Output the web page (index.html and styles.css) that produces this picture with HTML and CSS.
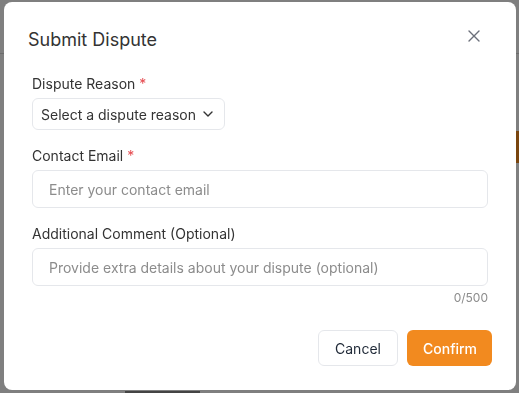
FILE: index.html
```html
<!DOCTYPE html>
<html lang="en">
<head>
    <meta charset="UTF-8">
    <meta name="viewport" content="width=device-width, initial-scale=1.0">
    <title>Submit Dispute</title>
    <link rel="stylesheet" href="styles.css">
</head>
<body>
    <div class="page">
        <div class="page-header"></div>
        <div class="page-row">
            <div class="page-btn"></div>
        </div>
        <div class="page-footer"></div>
    </div>

    <div class="overlay">
        <div class="modal">
            <div class="modal-header">
                <h2 class="modal-title">Submit Dispute</h2>
                <button class="close-btn" aria-label="Close">
                    <svg width="12" height="12" viewBox="0 0 12 12" fill="none">
                        <path d="M1 1L11 11M11 1L1 11" stroke="#6b6f7a" stroke-width="1.4" stroke-linecap="round"/>
                    </svg>
                </button>
            </div>
            <div class="modal-body">
                <div class="field">
                    <label class="field-label">Dispute Reason <span class="required">*</span></label>
                    <button class="select">
                        Select a dispute reason
                        <svg width="10" height="6" viewBox="0 0 10 6" fill="none">
                            <path d="M1 1L5 5L9 1" stroke="#333" stroke-width="1.4" stroke-linecap="round" stroke-linejoin="round"/>
                        </svg>
                    </button>
                </div>
                <div class="field">
                    <label class="field-label">Contact Email <span class="required">*</span></label>
                    <input class="text-input" type="email" placeholder="Enter your contact email">
                </div>
                <div class="field">
                    <label class="field-label">Additional Comment (Optional)</label>
                    <input class="text-input" type="text" placeholder="Provide extra details about your dispute (optional)">
                    <div class="counter">0/500</div>
                </div>
            </div>
            <div class="modal-footer">
                <button class="btn btn-cancel">Cancel</button>
                <button class="btn btn-confirm">Confirm</button>
            </div>
        </div>
    </div>
</body>
</html>
```

FILE: styles.css
```css
body{
    margin: 0;
    font-family: "Inter", "Noto Sans", sans-serif;
    background-color: #fff;
    overflow: hidden;
}
.page{
    height: 393px;
    display: flex;
    flex-direction: column;
}
.page-header{
    height: 53px;
    border-bottom: 1px solid #d8d8d8;
}
.page-row{
    display: flex;
    justify-content: flex-end;
    padding-top: 77px;
}
.page-btn{
    width: 60px;
    height: 32px;
    background-color: #f28a1f;
    margin-right: -41px;
}
.page-footer{
    margin-top: auto;
    margin-left: 125px;
    width: 75px;
    height: 2px;
    background-color: #888;
}
.overlay{
    position: fixed;
    inset: 0;
    background-color: rgba(0, 0, 0, 0.5);
    padding: 2px 0 0 4px;
}
.modal{
    width: 512px;
    height: 388px;
    background-color: #fff;
    border-radius: 8px;
    box-sizing: border-box;
    display: flex;
    flex-direction: column;
}
.modal-header{
    display: flex;
    justify-content: space-between;
    align-items: flex-start;
    padding: 26px 36px 0 24px;
}
.modal-title{
    margin: 0;
    font-size: 18px;
    font-weight: 400;
    color: #333;
    line-height: 24px;
}
.close-btn{
    border: none;
    background: none;
    padding: 0;
    margin-top: 2px;
    width: 12px;
    height: 12px;
    display: flex;
}
.modal-body{
    padding: 22px 28px 0 28px;
    display: flex;
    flex-direction: column;
    gap: 16px;
}
.field{
    display: flex;
    flex-direction: column;
    align-items: flex-start;
}
.field-label{
    font-size: 14px;
    color: #333;
    line-height: 20px;
    margin-bottom: 4px;
}
.required{
    color: #e5484d;
}
.select{
    height: 32px;
    padding: 0 11px 0 8px;
    border: 1px solid #e5e7eb;
    border-radius: 6px;
    background: #fff;
    font-family: inherit;
    font-size: 14px;
    color: #333;
    display: flex;
    align-items: center;
    gap: 7px;
}
.text-input{
    width: 100%;
    height: 38px;
    box-sizing: border-box;
    padding: 0 16px;
    border: 1px solid #e5e7eb;
    border-radius: 6px;
    font-family: inherit;
    font-size: 14px;
    color: #333;
    outline: none;
}
.text-input::placeholder{
    color: #8c8c8c;
}
.counter{
    align-self: flex-end;
    font-size: 12px;
    color: #8c8c8c;
    margin-top: 4px;
    line-height: 16px;
}
.modal-footer{
    display: flex;
    justify-content: flex-end;
    gap: 9px;
    padding: 24px 24px 0 24px;
}
.btn{
    height: 36px;
    border-radius: 6px;
    font-family: inherit;
    font-size: 14px;
    padding: 0 16px;
}
.btn-cancel{
    width: 80px;
    background: #fff;
    border: 1px solid #e5e7eb;
    color: #1f2937;
}
.btn-confirm{
    width: 85px;
    background-color: #f28a1f;
    border: none;
    color: #fff;
    font-weight: 500;
}
```
